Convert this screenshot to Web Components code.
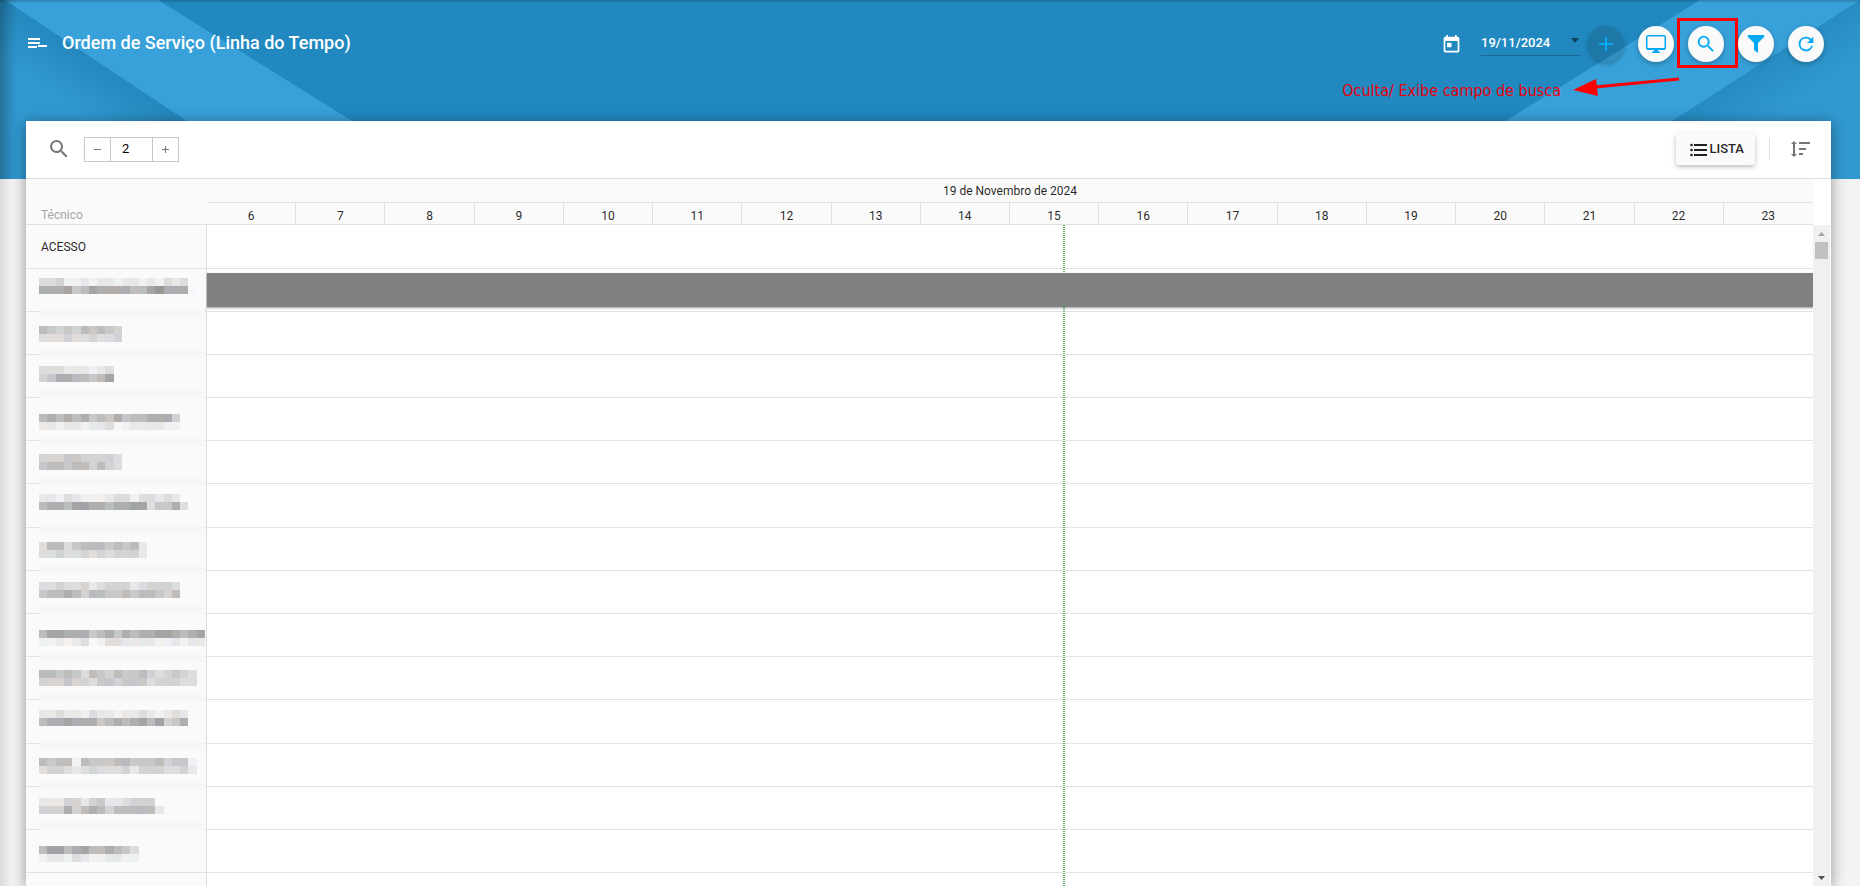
<!DOCTYPE html>
<html lang="pt-BR">
<head>
<meta charset="utf-8">
<title>Ordem de Serviço (Linha do Tempo)</title>
<style>
  html, body { margin: 0; height: 100%; }
  body { font-family: Roboto, "Liberation Sans", sans-serif; font-size: 12px; color: rgba(0,0,0,.87); overflow: hidden; }
</style>
</head>
<body>
<service-page>
  <page-header slot="header" heading="Ordem de Serviço (Linha do Tempo)"></page-header>
  <work-card>
    <tool-bar></tool-bar>
    <schedule-timeline day="19 de Novembro de 2024"></schedule-timeline>
  </work-card>
</service-page>

<script>
const define = (name, html, setup) => {
  const tpl = document.createElement('template');
  tpl.innerHTML = html;
  customElements.define(name, class extends HTMLElement {
    constructor() {
      super();
      this.attachShadow({ mode: 'open' }).append(tpl.content.cloneNode(true));
    }
    connectedCallback() {
      if (setup && !this.ready) { this.ready = true; setup(this, this.shadowRoot); }
    }
  });
};

/* Page frame: header above, card filling the rest of the window */
define('service-page', `
<style>
  :host { display: flex; flex-direction: column; height: 100vh; background: #f3f3f3; position: relative; isolation: isolate; }
  main { flex: 1; min-height: 0; display: flex; padding: 0 29px 0 26px; }
  .edge { position: absolute; inset: 0 auto 0 0; width: 12px; background: linear-gradient(90deg, rgba(0,0,0,.1), transparent); z-index: -1; }
</style>
<div class="edge"></div>
<slot name="header"></slot>
<main><slot></slot></main>`);

define('work-card', `
<style>
  :host { flex: 1; min-width: 0; display: flex; flex-direction: column; background: #fff; box-shadow: 0 2px 14px rgba(0,0,0,.4); }
</style>
<slot></slot>`);

/* Diagonal ribbons behind the header */
define('ribbon-backdrop', `
<style>
  :host { display: flex; justify-content: space-between; background: #2189c0; overflow: hidden; }
  svg { display: block; width: 460px; height: 179px; flex: none; }
  .right { transform: scaleX(-1); }
  .shade { position: absolute; inset: 0 0 auto; height: 3px; background: linear-gradient(rgba(0,0,0,.2), transparent); }
</style>
<svg class="left" viewBox="0 0 460 179" aria-hidden="true">
  <defs>
    <linearGradient id="t" gradientUnits="userSpaceOnUse" x1="96" y1="60" x2="66" y2="105"><stop offset="0" stop-color="#2487bd"/><stop offset="1" stop-color="#3199d0"/></linearGradient>
    <linearGradient id="s" gradientUnits="userSpaceOnUse" x1="0" y1="0" x2="18" y2="0"><stop offset="0" stop-opacity=".18"/><stop offset="1" stop-opacity="0"/></linearGradient>
  </defs>
  <path d="M0 0H158L445 179H0Z" fill="#38a1d9"/>
  <path d="M0 -3L5 0L274 179H0Z" fill="url(#t)"/>
  <rect width="18" height="179" fill="url(#s)"/>
</svg>
<svg class="right" viewBox="0 0 460 179" aria-hidden="true">
  <defs>
    <linearGradient id="t2" gradientUnits="userSpaceOnUse" x1="96" y1="60" x2="66" y2="105"><stop offset="0" stop-color="#268bc2"/><stop offset="1" stop-color="#3199d0"/></linearGradient>
  </defs>
  <path d="M0 0H160L448 179H0Z" fill="#38a1d9"/>
  <path d="M0 0L278 179H0Z" fill="url(#t2)"/>
</svg>
<div class="shade"></div>`);

define('round-button', `
<style>
  :host { display: block; position: relative; }
  button { width: 36px; height: 36px; border: 0; border-radius: 50%; padding: 0; background: #fafafa; color: #03a9f4; display: grid; place-items: center; box-shadow: 0 2px 5px rgba(0,0,0,.26); }
  :host([muted]) button { background: rgba(0,0,0,.12); }
</style>
<button type="button"><slot></slot></button><slot name="note"></slot>`,
(el, root) => root.querySelector('button').setAttribute('aria-label', el.getAttribute('label')));

/* Highlight frame with its arrow and caption */
define('help-note', `
<style>
  :host { position: absolute; left: -11px; top: -8px; width: 61px; height: 50px; box-sizing: border-box; border: 3px solid #fe0000; pointer-events: none; color: #e6000c; }
  p { position: absolute; margin: 0; right: 174px; top: 58px; font: 16px/24px "DejaVu Sans Condensed", "DejaVu Sans", sans-serif; white-space: nowrap; }
  svg { position: absolute; right: 54px; top: 54px; width: 110px; height: 24px; }
</style>
<p><slot></slot></p>
<svg viewBox="0 0 110 24" aria-hidden="true"><path d="M108 4L24 12" stroke="#f00" stroke-width="3"/><path d="M2 15L25 4L27 21Z" fill="#f00"/></svg>`);

define('date-field', `
<style>
  :host { display: flex; align-items: center; }
  svg.cal { width: 21px; height: 21px; margin-right: 19px; }
  .box { display: flex; width: 100px; height: 23px; border-bottom: 1px solid rgba(0,0,0,.22); }
  input { flex: 1; min-width: 0; border: 0; padding: 0 0 1px; background: none; color: #fff; font: 500 13px/20px Roboto, sans-serif; outline: 0; }
  button { border: 0; background: none; padding: 0 2px 6px; display: flex; align-items: center; }
</style>
<svg class="cal" viewBox="0 0 24 24" fill="#fff" aria-hidden="true"><path d="M19 3h-1V1h-2v2H8V1H6v2H5a2 2 0 0 0-2 2v14a2 2 0 0 0 2 2h14a2 2 0 0 0 2-2V5a2 2 0 0 0-2-2zm0 16H5V8h14v11zM7 10h5v5H7z"/></svg>
<div class="box"><input type="text" value="19/11/2024" aria-label="Data"><button type="button" aria-label="Abrir calendário"><svg width="8" height="5" viewBox="0 0 8 5"><path d="M0 0H8L4 5Z" fill="#10415c"/></svg></button></div>`);

define('page-header', `
<style>
  :host { display: block; position: relative; height: 121px; }
  ribbon-backdrop { position: absolute; inset: 0 0 auto; height: 179px; z-index: -2; }
  header { display: flex; align-items: center; padding: 26px 36px 0 28px; height: 36px; }
  .menu { border: 0; background: none; padding: 0 0 2px; margin-right: 15px; display: flex; }
  h1 { margin: 0; flex: 1; font-size: 18px; line-height: 24px; font-weight: 500; color: #fff; padding-bottom: 2px; }
  .actions { display: flex; gap: 14px; align-items: center; }
  date-field { margin-right: -7px; }
</style>
<ribbon-backdrop></ribbon-backdrop>
<header>
  <button class="menu" type="button" aria-label="Menu"><svg width="19" height="10" viewBox="0 0 19 10" fill="#fff"><path d="M0 0H12V2H0ZM0 4H12V6H0ZM0 8H9V10H0ZM10 7H19V9H10Z"/></svg></button>
  <h1></h1>
  <div class="actions">
    <date-field></date-field>
    <round-button muted label="Adicionar"><svg width="24" height="24" viewBox="0 0 24 24" fill="currentColor"><path d="M19 13h-6v6h-2v-6H5v-2h6V5h2v6h6z"/></svg></round-button>
    <round-button label="Monitor"><svg width="22" height="22" viewBox="0 0 22 22" fill="currentColor"><path d="M3 2H19Q21 2 21 4V15Q21 17 19 17H13V18L15 19V20H7V19L9 18V17H3Q1 17 1 15V4Q1 2 3 2ZM2.500 3.500V15H19.500V3.500Z" fill-rule="evenodd"/></svg></round-button>
    <round-button label="Buscar"><svg width="22" height="22" viewBox="0 0 24 24" fill="currentColor"><path d="M15.500 14h-.79l-.28-.27A6.471 6.471 0 0 0 16 9.500 6.500 6.500 0 1 0 9.500 16c1.610 0 3.090-.59 4.230-1.570l.27.28v.79l5 4.990L20.490 19l-4.990-5zm-6 0C7.010 14 5 11.990 5 9.500S7.010 5 9.500 5 14 7.010 14 9.500 11.990 14 9.500 14z"/></svg><help-note slot="note">Oculta/ Exibe campo de busca</help-note></round-button>
    <round-button label="Filtrar"><svg width="18" height="20" viewBox="0 0 18 20" fill="currentColor"><path d="M1 1H17Q18 2 17 3L11 9V19L7 16V9L1 3Q0 2 1 1Z"/></svg></round-button>
    <round-button label="Atualizar"><svg width="22" height="22" viewBox="0 0 24 24" fill="currentColor"><path d="M17.650 6.350A7.958 7.958 0 0 0 12 4a8 8 0 1 0 7.730 10h-2.080A6 6 0 1 1 12 6c1.660 0 3.140.69 4.220 1.780L13 11h7V4z"/></svg></round-button>
  </div>
</header>`,
(el, root) => root.querySelector('h1').textContent = el.getAttribute('heading'));

define('number-stepper', `
<style>
  :host { display: flex; border: 1px solid #c8c8c8; height: 23px; }
  button { width: 25px; border: 0; padding: 0; background: #fff; display: grid; place-items: center; }
  input { width: 43px; box-sizing: border-box; border: solid #c8c8c8; border-width: 0 1px; padding: 0 0 0 11px; font: 13px/22px Roboto, sans-serif; color: #000; outline: 0; border-radius: 0; }
</style>
<button type="button" aria-label="Diminuir"><svg width="7" height="7" viewBox="0 0 7 7"><path d="M0 3H7V4H0Z" fill="#757575"/></svg></button>
<input type="text" inputmode="numeric" value="2" aria-label="Quantidade">
<button type="button" aria-label="Aumentar"><svg width="7" height="7" viewBox="0 0 7 7"><path d="M0 3H3V0H4V3H7V4H4V7H3V4H0Z" fill="#757575"/></svg></button>`);

define('tool-bar', `
<style>
  :host { display: flex; align-items: center; height: 56px; border-bottom: 1px solid #e0e0e0; padding: 0 21px 1px; }
  button { border: 0; background: none; padding: 0; display: flex; align-items: center; }
  number-stepper { margin-left: 13px; margin-right: auto; }
  .list { height: 32px; padding: 0 11px 0 14px; gap: 2px; border-radius: 3px; background: #fafafa; box-shadow: 0 2px 5px rgba(0,0,0,.26); color: rgba(0,0,0,.87); font: 500 13px/32px Roboto, sans-serif; }
  .list svg { margin-top: 2px; }
  .rule { width: 1px; height: 22px; background: #e0e0e0; margin: 0 21px 0 14px; }
</style>
<button type="button" aria-label="Pesquisar"><svg width="24" height="24" viewBox="0 0 24 24" fill="#757575"><path d="M15.500 14h-.79l-.28-.27A6.471 6.471 0 0 0 16 9.500 6.500 6.500 0 1 0 9.500 16c1.610 0 3.090-.59 4.230-1.570l.27.28v.79l5 4.990L20.490 19l-4.990-5zm-6 0C7.010 14 5 11.990 5 9.500S7.010 5 9.500 5 14 7.010 14 9.500 11.990 14 9.500 14z"/></svg></button>
<number-stepper></number-stepper>
<button class="list" type="button"><svg width="17" height="14" viewBox="0 0 17 14" fill="#212121"><path d="M4 1H17V3H4ZM4 6H17V8H4ZM4 11H17V13H4Z"/><circle cx="1.500" cy="2" r="1.300"/><circle cx="1.500" cy="7" r="1.300"/><circle cx="1.500" cy="12" r="1.300"/></svg>LISTA</button>
<div class="rule"></div>
<button type="button" aria-label="Ordenar"><svg width="19" height="16" viewBox="0 0 19 16" fill="#757575"><path d="M3 0L6 3H4V13H6L3 16L0 13H2V3H0ZM8 1H19V3H8ZM8 7H15V9H8ZM8 12H12V14H8Z"/></svg></button>`);

/* Names hidden behind a mosaic. Each line: grid row, then two strings of
   brightness levels (0 = dark, 9 = nearly blank). */
const MOSAIC = [
  [1,  '665887877877878676', '2221431222233102229'],
  [7,  '3454534345', '6665665665'],
  [12, '666777876', '542233431'],
  [18, '32323243424332225', '77877877698777788'],
  [23, '5554455556', '4334335356'],
  [28, '77867888766866767', '322311223221164426'],
  [34, '6336433343437', '6656656565557'],
  [39, '66566576555765556', '43323533443433453'],
  [45, '31122243242322112321', '88787698667777887877'],
  [50, '3343463453443565456', '5554556445444655566'],
  [55, '776778677877678767', '322122243232131542'],
  [61, '3433834443344435448', '6556765666575556657'],
  [66, '77755754776555', '555253235333337'],
  [72, '311321332346', '877867887788']
];
const BANDS = [5, 10, 15, 21, 26, 32, 37, 42, 48, 53, 59, 64, 69];
const LEVEL = [150, 164, 174, 188, 200, 211, 221, 232, 241, 248];
define('name-mosaic', `
<style>
  :host { display: block; }
  svg { display: block; width: 166px; height: 592px; }
</style>
<svg viewBox="0 0 166 592" shape-rendering="crispEdges" aria-hidden="true"></svg>`,
(el, root) => {
  const tint = [[0,0,0],[-2,1,1],[3,0,-3],[0,0,0],[-1,1,-2],[-3,-1,4],[0,0,0],[3,1,-1]];
  let out = BANDS.map(y => `<rect x="0" y="${y * 8}" width="166" height="8" fill="#f7f7f7"/>`).join('');
  MOSAIC.forEach(([row, ...lines], k) => lines.forEach((line, j) => {
    [...line].forEach((c, i) => {
      const x = Math.round(i * 166 / 20), w = Math.round((i + 1) * 166 / 20) - x;
      const t = tint[(i * 5 + k * 3 + j + (i * i) % 7) % 8];
      out += `<rect x="${x}" y="${(row + j) * 8}" width="${w}" height="8" fill="rgb(${t.map(v => LEVEL[c] + v).join()})"/>`;
    });
  }));
  root.querySelector('svg').innerHTML = out;
});

define('scroll-track', `
<style>
  :host { width: 17px; display: flex; flex-direction: column; align-items: center; background: #f0f0f0; }
  svg { display: block; width: 7px; height: 4px; margin: 7px 0 6px; }
  .thumb { width: 13px; height: 17px; background: #c1c1c1; margin-bottom: auto; }
</style>
<svg viewBox="0 0 7 4"><path d="M0 4H7L3.500 0Z" fill="#a3a3a3"/></svg>
<div class="thumb"></div>
<svg viewBox="0 0 7 4"><path d="M0 0H7L3.500 4Z" fill="#505050"/></svg>`);

define('schedule-timeline', `
<style>
  :host { flex: 1; min-height: 0; display: flex; padding-right: 1px; }
  .view { flex: 1; min-width: 0; position: relative; overflow: hidden; }
  table { width: 100%; table-layout: fixed; border-collapse: separate; border-spacing: 0; position: relative; }
  th, td { box-sizing: border-box; padding: 0; font-weight: 400; line-height: 16px; }
  thead th { background: #fafafa; border-bottom: 1px solid #e0e0e0; height: 22px; padding-top: 4px; }
  thead .day { height: 24px; padding: 0; }
  thead .tech { text-align: left; vertical-align: bottom; color: #a6a6a6; padding: 0 0 1px 15px; }
  .hour:not(:last-child) { border-right: 1px solid #e0e0e0; }
  .name { width: 181px; }
  tbody th { height: 43px; text-align: left; background: #fafafa; padding-left: 15px; border-right: 1px solid #dcdcdc; border-bottom: 1px solid #e2e2e2; }
  tbody td { border-bottom: 1px solid #e2e2e2; }
  tbody tr:first-child th, tbody tr:nth-child(5n+7) th { height: 44px; }
  .busy { height: 34px; background: #808080; box-shadow: 0 1px 2px rgba(0,0,0,.4); position: relative; z-index: 1; }
  .lane { position: absolute; inset: 46px 0 0 181px; pointer-events: none; z-index: 0; }
  .now { margin-left: 53.300%; width: 2px; height: 100%; background: repeating-linear-gradient(#66b266 0 1px, #fff 1px 2px); }
  name-mosaic { position: absolute; left: 13px; top: 91px; }
  scroll-track { margin-top: 46px; }
</style>
<div class="view">
  <table>
    <colgroup><col class="name"><col span="18"></colgroup>
    <thead>
      <tr><th class="tech" rowspan="2" scope="col">Técnico</th><th class="day" colspan="18"></th></tr>
      <tr class="hours"></tr>
    </thead>
    <tbody></tbody>
  </table>
  <div class="lane"><div class="now"></div></div>
  <name-mosaic></name-mosaic>
</div>
<scroll-track></scroll-track>`,
(el, root) => {
  root.querySelector('.day').textContent = el.getAttribute('day');
  root.querySelector('.hours').innerHTML =
    Array.from({ length: 18 }, (_, i) => `<th class="hour" scope="col">${i + 6}</th>`).join('');
  root.querySelector('tbody').innerHTML = Array.from({ length: 16 }, (_, i) =>
    `<tr><th scope="row">${i ? '' : 'ACESSO'}</th><td colspan="18">${i === 1 ? '<div class="busy"></div>' : ''}</td></tr>`).join('');
});
</script>
</body>
</html>
